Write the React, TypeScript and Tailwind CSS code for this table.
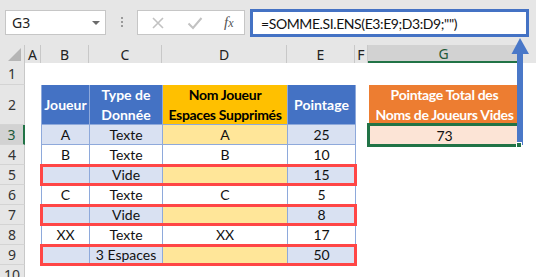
import { ReactNode } from 'react'

interface Row {
  n: number
  b: string
  c: string
  d: string
  e: string
  red?: boolean
}

const rows: Row[] = [
  { n: 3, b: 'A', c: 'Texte', d: 'A', e: '25' },
  { n: 4, b: 'B', c: 'Texte', d: 'B', e: '10' },
  { n: 5, b: '', c: 'Vide', d: '', e: '15', red: true },
  { n: 6, b: 'C', c: 'Texte', d: 'C', e: '5' },
  { n: 7, b: '', c: 'Vide', d: '', e: '8', red: true },
  { n: 8, b: 'XX', c: 'Texte', d: 'XX', e: '17' },
  { n: 9, b: '', c: '3 Espaces', d: '', e: '50', red: true },
]

const cols = [
  { l: 'A', w: 'w-[16px]' },
  { l: 'B', w: 'w-[48px]' },
  { l: 'C', w: 'w-[73px]' },
  { l: 'D', w: 'w-[125px]' },
  { l: 'E', w: 'w-[68px]' },
  { l: 'F', w: 'w-[13px]' },
]

function RowHead({ n, h, active }: { n: number; h: string; active?: boolean }) {
  return (
    <div
      className={`${h} w-[25px] shrink-0 flex items-center justify-center border-b border-[#d4d4d4] ${
        active ? 'bg-[#d2d2d2] border-r-2 border-r-[#217346] text-[#1e5a38]' : 'bg-[#e6e6e6] border-r border-r-[#c8c8c8] text-[#333]'
      }`}
    >
      {n}
    </div>
  )
}

function Cell({ w, bg, children }: { w: string; bg: string; children?: ReactNode }) {
  return (
    <div className={`${w} ${bg} h-full flex items-center justify-center border-r border-b border-[#8ea9db]`}>
      {children}
    </div>
  )
}

export default function App() {
  return (
    <div className="relative w-[536px] h-[277px] overflow-hidden bg-white font-['Noto_Sans',sans-serif] text-[13px]">
      {/* formula bar */}
      <div className="h-[45px] bg-[#e6e6e6] flex items-start">
        <div className="ml-[5px] mt-[10px] w-[101px] h-[25px] bg-white border border-[#c6c6c6] flex items-center pl-[6px] text-[14px] text-[#222]">
          <span className="flex-1">G3</span>
          <span className="mr-[5px] w-0 h-0 border-l-[4px] border-r-[4px] border-t-[4px] border-l-transparent border-r-transparent border-t-[#6b6b6b]" />
        </div>
        <div className="w-[31px] mt-[17px] flex flex-col items-center gap-[2px]">
          <span className="w-[2px] h-[2px] bg-[#9a9a9a]" />
          <span className="w-[2px] h-[2px] bg-[#9a9a9a]" />
          <span className="w-[2px] h-[2px] bg-[#9a9a9a]" />
        </div>
        <div className="mt-[10px] w-[108px] h-[25px] bg-white border border-[#c6c6c6] flex items-center">
          <svg width="14" height="14" viewBox="0 0 14 14" className="ml-[13px]">
            <path d="M2 2 L12 12 M12 2 L2 12" stroke="#c2c2c2" strokeWidth="1.6" />
          </svg>
          <svg width="16" height="14" viewBox="0 0 16 14" className="ml-[22px]">
            <path d="M1.5 7.5 L6 12 L14.5 2" stroke="#c2c2c2" strokeWidth="2" fill="none" />
          </svg>
          <span className="ml-[21px] font-['Liberation_Serif',serif] italic text-[15px] text-[#555]">
            f<span className="text-[12px]">x</span>
          </span>
        </div>
        <div className="ml-[5px] mt-[9px] w-[279px] h-[28px] bg-white border-[3px] border-[#4472c4] flex items-center pl-[8px] font-[Lato,sans-serif] text-[14px] tracking-[-0.4px] text-[#111]">
          =SOMME.SI.ENS(E3:E9;D3:D9;"")
        </div>
      </div>

      {/* column headers */}
      <div className="flex h-[18px] bg-[#e6e6e6] text-[14px] text-[#222]">
        <div className="w-[25px] shrink-0 flex items-end justify-end pr-[3px] pb-[2px] border-r border-[#c8c8c8]">
          <svg width="13" height="13" viewBox="0 0 13 13">
            <polygon points="13,0 13,13 0,13" fill="#b5b5b5" />
          </svg>
        </div>
        {cols.map(c => (
          <div key={c.l} className={`${c.w} shrink-0 flex items-center justify-center border-r border-[#c8c8c8]`}>
            {c.l}
          </div>
        ))}
        <div className="w-[151px] shrink-0 flex items-center justify-center bg-[#d2d2d2] border-b-2 border-[#217346] text-[#1e5a38]">
          G
        </div>
        <div className="flex-1 border-l border-[#c8c8c8]" />
      </div>

      {/* sheet */}
      <div className="font-[Lato,sans-serif] text-[14px] text-[#111]">
        <div className="flex h-[22px] font-['Noto_Sans',sans-serif]">
          <RowHead n={1} h="h-[22px]" />
        </div>

        <div className="flex h-[40px]">
          <div className="font-['Noto_Sans',sans-serif] text-[14px] flex items-end">
            <RowHead n={2} h="h-[40px]" />
          </div>
          <div className="w-[16px]" />
          <div className="flex border-l border-[#8ea9db] font-bold leading-[20px] text-center">
            <Cell w="w-[48px]" bg="bg-[#4472c4] text-white">Joueur</Cell>
            <Cell w="w-[73px]" bg="bg-[#4472c4] text-white">
              <div>Type de<br />Donnée</div>
            </Cell>
            <Cell w="w-[125px]" bg="bg-[#ffc000] text-black">
              <div className="tracking-[-0.3px]">Nom Joueur<br />Espaces Supprimés</div>
            </Cell>
            <Cell w="w-[68px]" bg="bg-[#4472c4] text-white">Pointage</Cell>
          </div>
          <div className="w-[13px]" />
          <div className="w-[151px] bg-[#ed7d31] text-white font-bold leading-[20px] text-center flex items-center justify-center tracking-[-0.3px]">
            <div>Pointage Total des<br />Noms de Joueurs Vides</div>
          </div>
        </div>

        {rows.map(r => {
          const tint = r.n % 2 === 1
          return (
            <div key={r.n} className="flex h-[20px]">
              <div className="font-['Noto_Sans',sans-serif] text-[14px]">
                <RowHead n={r.n} h="h-[20px]" active={r.n === 3} />
              </div>
              <div className="w-[16px]" />
              <div
                className={`flex border-l border-[#8ea9db] ${
                  r.red ? 'relative z-10 outline-3 outline-solid outline-[#ff4646] -outline-offset-2' : ''
                }`}
              >
                <Cell w="w-[48px]" bg={tint ? 'bg-[#d9e1f2]' : 'bg-white'}>{r.b}</Cell>
                <Cell w="w-[73px]" bg={tint ? 'bg-[#d9e1f2]' : 'bg-white'}>{r.c}</Cell>
                <Cell w="w-[125px]" bg={tint ? 'bg-[#ffe699]' : 'bg-white'}>{r.d}</Cell>
                <Cell w="w-[68px]" bg={tint ? 'bg-[#d9e1f2]' : 'bg-white'}>{r.e}</Cell>
              </div>
              {r.n === 3 && (
                <>
                  <div className="w-[13px]" />
                  <div className="w-[151px] h-[20px] bg-[#fce4d6] flex items-center justify-center outline-3 outline-solid outline-[#217346] -outline-offset-1">
                    73
                  </div>
                </>
              )}
            </div>
          )
        })}

        <div className="flex h-[20px] font-['Noto_Sans',sans-serif]">
          <RowHead n={10} h="h-[20px]" />
        </div>
      </div>

      {/* arrow from G3 to formula bar */}
      <svg className="absolute left-[508px] top-[36px]" width="24" height="112" viewBox="0 0 24 112">
        <polygon points="12,2 21,18 3.5,18" fill="#4a78c8" />
        <rect x="9" y="17" width="6" height="92" fill="#4a78c8" />
      </svg>
      <div className="absolute left-[516px] top-[142px] w-[6px] h-[6px] bg-[#217346] border border-white" />
    </div>
  )
}
